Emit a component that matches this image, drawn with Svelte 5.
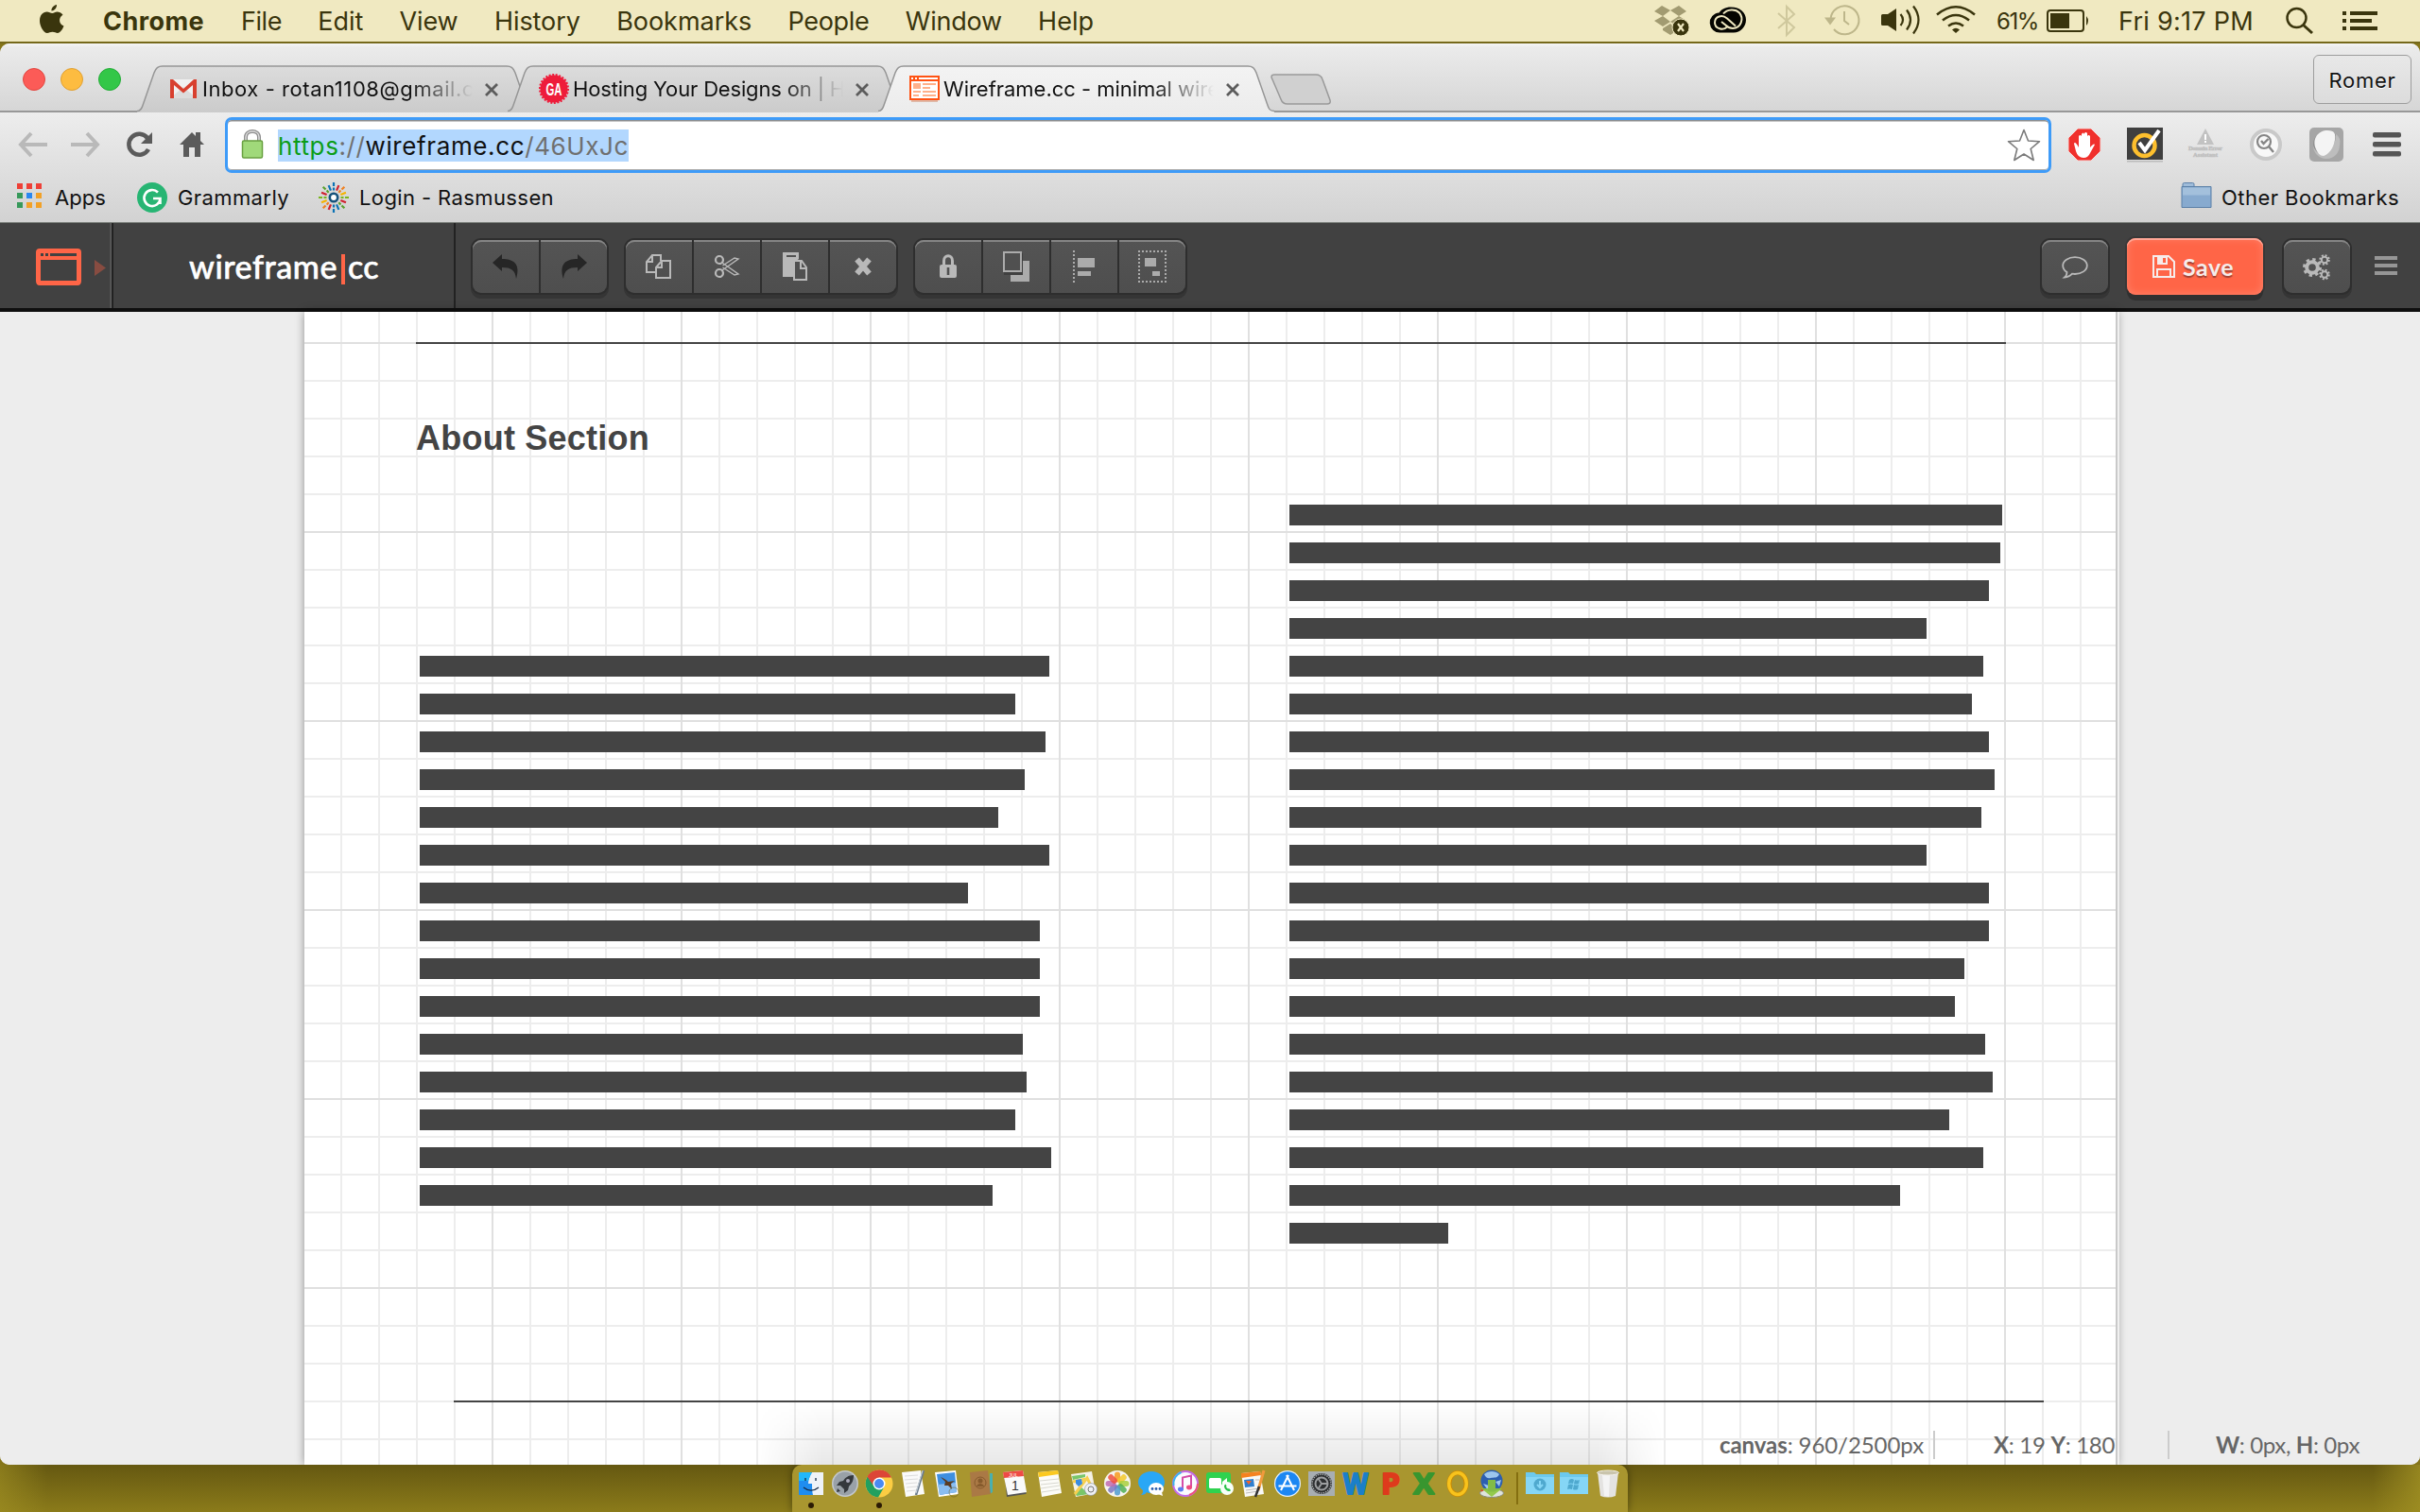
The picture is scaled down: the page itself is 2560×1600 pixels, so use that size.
<script>
  const menus = [
    ['File', 43], ['Edit', 48], ['View', 62], ['History', 91], ['Bookmarks', 143],
    ['People', 86], ['Window', 102], ['Help', 59]
  ];
  const tabs = [
    { icon: 'gmail', title: 'Inbox - rotan1108@gmail.c', width: 288 },
    { icon: 'ga', title: 'Hosting Your Designs on | H', width: 288 },
    { icon: 'wire', title: 'Wireframe.cc - minimal wire', width: 292, active: true }
  ];
  const leftBars = [666, 630, 662, 640, 612, 666, 580, 656, 656, 656, 638, 642, 630, 668, 606];
  const rightBars = [754, 752, 740, 674, 734, 722, 740, 746, 732, 674, 740, 740, 714, 704, 736, 744, 698, 734, 646, 168];
  const dock = ['finder', 'launchpad', 'chrome', 'textedit', 'mail', 'contacts', 'calendar', 'notes', 'maps', 'photos',
    'messages', 'itunes', 'facetime', 'pages', 'appstore', 'settings', 'word', 'powerpoint', 'excel', 'outlook', 'download'];
  const running = ['finder', 'chrome'];
  const petals = ['#f79a1e', '#f4c92c', '#a8cf3d', '#4fae54', '#4f9bd0', '#7a78c4', '#c06bb0', '#ee4f3f'];
  const rays = ['#0b72b5', '#f4b400', '#5aa02c', '#d0202e', '#7ab51d', '#0b72b5', '#f08020', '#d0202e'];

  // Spreads a label's letters so that it takes exactly the given width.
  function fit(node, width) {
    const natural = node.getBoundingClientRect().width;
    node.style.letterSpacing = (width - natural) / node.textContent.length + 'px';
  }
</script>

{#snippet favicon(name)}
  {#if name === 'gmail'}
    <svg width="32" height="32" viewBox="0 0 32 32">
      <path d="M2 6h28v20H2z" fill="#f1f1f1" /><path d="M2 26l14-12 14 12z" fill="#dcdcdc" />
      <path d="M2 26V6h3l11 10L27 6h3v20h-4V12L16 20.500 6 12v14z" fill="#d8402f" />
    </svg>
  {:else if name === 'ga'}
    <svg width="32" height="32" viewBox="0 0 32 32">
      <circle cx="16" cy="16" r="14.500" fill="#ee1c3a" /><circle cx="16" cy="16" r="15" fill="none" stroke="#ee1c3a" stroke-width="2" stroke-dasharray="2 1.600" />
      <text x="16" y="23" text-anchor="middle" class="ga" textLength="17" lengthAdjust="spacingAndGlyphs">GA</text>
    </svg>
  {:else}
    <svg width="32" height="32" viewBox="0 0 32 32">
      <path d="M2 27h28v3H2z" fill="#e0b9a8" /><path d="M0 2h32v26H0z" fill="#ff5314" />
      <path d="M2 8h28v18H2zM2 4h2v2H2zM6 4h2v2H6zM10 4h20v2H10z" fill="#fff" />
      <path d="M4 10h8v6H4zM14 10h14v2H14zM14 14h8v2h-8zM4 18h8v2H4zM14 18h14v2H14zM4 22h6v2H4zM14 22h14v2H14z" fill="#ffb08a" />
    </svg>
  {/if}
{/snippet}

{#snippet dockIcon(name)}
  <svg width="30" height="30" viewBox="0 0 30 30">
    {#if name === 'finder'}
      <path d="M2 3h26v24H2z" fill="#eef2f8" /><path d="M2 3h14c-3 5-4 9-4 12h4c0 5 0 8 1 12H2z" fill="#1f8df0" /><path d="M2 3h14c-2 3-3 6-4 9H2z" fill="#22b8f8" />
      <path d="M9 9v3M20 9v3M7 19c5 4 11 4 16 0" stroke="#182a44" stroke-width="1.300" fill="none" />
    {:else if name === 'launchpad'}
      <circle cx="15" cy="15" r="14" fill="#c3c8cd" /><circle cx="15" cy="15" r="12.500" fill="#99a1a8" />
      <path d="M24 6c-6 0-9 3-11 6l-4 1-3 4 4 0 4 4 0 4 4-3 1-4c3-3 5-6 5-12z" fill="#34383d" /><circle cx="18" cy="12" r="2" fill="#aab" /><path d="M6 24l1-4 3 3z" fill="#34383d" />
    {:else if name === 'chrome'}
      <circle cx="15" cy="15" r="14.500" fill="#fccd43" /><path d="M15 15L2.500 7.800A14.500 14.500 0 0 1 27.500 8H15z" fill="#dc4637" />
      <path d="M2.500 7.800A14.500 14.500 0 0 0 14 29.500L20 19l-5-4z" fill="#22a05f" /><path d="M2.500 7.800A14.500 14.500 0 0 1 28 8.500H15a6.500 6.500 0 0 0-6.200 8.500z" fill="#dc4637" />
      <circle cx="15" cy="15" r="6.500" fill="#fff" /><circle cx="15" cy="15" r="5" fill="#4a8af4" />
    {:else if name === 'textedit'}
      <path d="M3 3l20-2 4 25-20 3z" fill="#fafafa" /><path d="M6 7l14-1M6 11l14-1M7 15l12-1M8 19l11-1M8 23l10-1" stroke="#dcdcdc" /><path d="M26 1l-8 26" stroke="#6c7c8c" stroke-width="2.500" /><path d="M25 1l-7 24" stroke="#cdd6de" />
    {:else if name === 'mail'}
      <path d="M2 3l22-2 3 25-21 3z" fill="#fff" /><path d="M4 5l19-2 2 21-18 3z" fill="#3f8fe0" /><path d="M5 16l19-2 1 10-18 3z" fill="#8abdf0" />
      <path d="M8 8c3 1 6 3 8 5l7-1-4 3 1 6-4-4-4 0 1-4z" fill="#5b3c22" /><circle cx="22" cy="24" r="5" fill="none" stroke="#65591f" opacity=".5" />
    {:else if name === 'contacts'}
      <path d="M24 4l3 0v20l-3 2z" fill="#48b0b0" /><path d="M3 3l19-2 3 25-20 3z" fill="#aa7945" /><circle cx="14" cy="14" r="6" fill="none" stroke="#855a2c" /><circle cx="14" cy="12" r="2.500" fill="#855a2c" /><path d="M10 18c1-4 7-4 8 0z" fill="#855a2c" />
    {:else if name === 'calendar'}
      <path d="M4 8l23 17-1 1-20 3z" fill="#555" /><path d="M2 3l21-2 4 23-20 3z" fill="#fafafa" /><path d="M2 3l21-2 1 6-21 2z" fill="#ee4b45" />
      <text x="13" y="7.500" text-anchor="middle" class="cal-m">JUL</text><text x="15" y="22" text-anchor="middle" class="cal-d">1</text>
    {:else if name === 'notes'}
      <path d="M3 3l21-2 4 24-21 4z" fill="#fcfcf8" /><path d="M3 3l21-2 1 4-21 3z" fill="#fbc920" /><path d="M5 12l20-2M6 16l19-2M6 20l20-3M7 24l19-3" stroke="#d8d8d0" />
    {:else if name === 'maps'}
      <path d="M2 5l22-3 4 23-21 4z" fill="#f5f2e6" /><path d="M3 7l14-2 0 3-13 3zM5 24l8-5 8 7-13 2z" fill="#79c66a" /><path d="M4 13l14-3M6 26L19 9l6 12" stroke="#f7cf4e" stroke-width="3" fill="none" /><path d="M7 11l6-1 1 5-4 3-3-3z" fill="#3b8be0" />
      <circle cx="23" cy="21" r="6.500" fill="#eef0f4" stroke="#8891a0" stroke-width=".6" /><circle cx="23" cy="21" r="3" fill="none" stroke="#777" />
    {:else if name === 'photos'}
      <circle cx="15" cy="15" r="14" fill="#f6f4ef" />
      {#each petals as fill, i}<rect x="12" y="2.500" width="6" height="11" rx="3" {fill} opacity=".85" transform={`rotate(${i * 45} 15 15)`} />{/each}
    {:else if name === 'messages'}
      <path d="M15 2c8 0 14 5 14 11.500S23 25 15 25c-2 0-4 0-5-1-1 2-3 3-6 3 2-2 2-3 2-5-3-2-5-5-5-8.500C1 7 7 2 15 2z" fill="#29a7f5" /><ellipse cx="20" cy="20.500" rx="8" ry="6.500" fill="#fff" /><path d="M26 24l1 4-5-2z" fill="#fff" />
      <circle cx="16" cy="20.500" r="1.400" fill="#2a5fae" /><circle cx="20" cy="20.500" r="1.400" fill="#2a5fae" /><circle cx="24" cy="20.500" r="1.400" fill="#2a5fae" />
    {:else if name === 'itunes'}
      <circle cx="15" cy="15" r="13" fill="#fbfbff" stroke="#c46be8" stroke-width="2" /><path d="M2.500 17a13 13 0 0 1 8-14" stroke="#38b8f0" stroke-width="2" fill="none" /><path d="M19 27a13 13 0 0 0 9-12" stroke="#f0507c" stroke-width="2" fill="none" />
      <path d="M12 21V8.500l9-2V18" stroke="#d64ca8" stroke-width="2" fill="none" /><ellipse cx="10" cy="21" rx="3" ry="2.400" fill="#5c7cf0" /><ellipse cx="19" cy="19" rx="3" ry="2.400" fill="#ee4a80" />
    {:else if name === 'facetime'}
      <rect x="1" y="3" width="26" height="22" rx="3" fill="#2fd24f" /><rect x="4" y="9" width="13" height="11" rx="1.500" fill="#fff" /><path d="M18 13l5-4v11l-5-4z" fill="#fff" /><circle cx="23" cy="20" r="7" fill="#f7fff8" />
      <path d="M20 17c0 4 3 6 6 6l1-1-2-2-1 .500-2-2 .500-1-1-2z" fill="#27c148" />
    {:else if name === 'pages'}
      <path d="M2 4l20-2 4 24-20 3z" fill="#f8f8f6" /><path d="M2 4l20-2 1 4-21 3z" fill="#f58220" /><path d="M5 11l10-1 1 8-10 1z" fill="#2f7fd0" /><path d="M7 12l3 4 3-4z" fill="#f0642c" /><path d="M7 22l14-2M7 25l13-2M17 11l4 0" stroke="#bbb" />
      <path d="M26 1l-6 21" stroke="#f29a3c" stroke-width="3" /><path d="M21 18l-4 11" stroke="#333" stroke-width="2.500" />
    {:else if name === 'appstore'}
      <circle cx="15" cy="15" r="14" fill="#e3f0fc" /><circle cx="15" cy="15" r="12.800" fill="#1c87f2" /><path d="M16 6L8 22M14 6l8 16M5.500 17.500h19" stroke="#fff" stroke-width="2" fill="none" />
    {:else if name === 'settings'}
      <path d="M1 2h28v26H1z" fill="#a8aeb2" /><circle cx="15" cy="15" r="11" fill="#2d2f31" /><circle cx="15" cy="15" r="10" fill="none" stroke="#a5a8aa" stroke-width="1.500" stroke-dasharray="1.500 1" /><circle cx="15" cy="15" r="6.500" fill="none" stroke="#9c9ea0" stroke-width="2" /><path d="M15 15l7 0M15 15l-4-6M15 15l-4 6" stroke="#9c9ea0" stroke-width="1.800" />
    {:else if name === 'word'}
      <text x="15" y="26" text-anchor="middle" class="office" fill="#1b7fc9" stroke="#1b7fc9" textLength="26" lengthAdjust="spacingAndGlyphs">W</text>
    {:else if name === 'powerpoint'}
      <text x="16" y="26" text-anchor="middle" class="office" fill="#de3a1c" stroke="#de3a1c" textLength="20" lengthAdjust="spacingAndGlyphs">P</text>
    {:else if name === 'excel'}
      <text x="15" y="26" text-anchor="middle" class="office" fill="#38962f" stroke="#38962f" textLength="22" lengthAdjust="spacingAndGlyphs">X</text>
    {:else if name === 'outlook'}
      <ellipse cx="15" cy="15" rx="9" ry="11.500" fill="none" stroke="#c98c06" stroke-width="5" /><ellipse cx="15" cy="15" rx="9.300" ry="11.500" fill="none" stroke="#f8c31c" stroke-width="3.400" />
    {:else if name === 'download'}
      <ellipse cx="15" cy="25" rx="12.500" ry="4.500" fill="#dfe3dc" stroke="#8a8d7c" /><path d="M4 23a12 4 0 0 1 7-3" stroke="#d4502c" stroke-width="2" fill="none" /><circle cx="15" cy="12" r="11.500" fill="#2c5fb0" /><path d="M7 5c4-4 12-4 16 0-2 5-6 3-9 4s-5 0-7-4zM6 15l6 2-1 5zM19 13l6-2-2 7z" fill="#9cc6ee" />
      <path d="M11 11h8v9h7l-11 9-11-9h7z" fill="#8cc63c" opacity=".9" />
    {/if}
  </svg>
{/snippet}

<div class="screen">
  <header class="menubar">
    <svg class="apple" width="26" height="32" viewBox="0 0 26 32"><path d="M18 1c.3 3-2.500 6.500-5.500 6.500C12 4.500 15 1.300 18 1zM18.500 8.500c2 0 4.500 1 6 3.300-5 3-4.300 9.700 1 11.700-1.300 3.500-4 7.500-6.500 7.500-2 0-3-1.200-5.500-1.200S10 31 8 31C4 31 0 23.500 0 18c0-6 3.500-9.500 7.500-9.500 2.300 0 4 1.500 5.800 1.500s3-1.500 5.200-1.500z" fill="#3a350d" /></svg>
    <span class="app" use:fit={107}>Chrome</span>
    <nav>{#each menus as [name, width]}<span use:fit={width}>{name}</span>{/each}</nav>
    <div class="extras">
      <svg class="i-dropbox" width="38" height="34" viewBox="0 0 38 34"><path d="M8 1l9 5-8 6-9-5zM26 1l-9 5 9 6 8-5zM0 17l9-5 8 6-8 5zM26 12l8 5-3 2-7 3-7-4zM9 25l8-5 3 3v7l-3 2-8-5z" fill="#a29b71" /><circle cx="28" cy="24" r="9" fill="#3a350d" stroke="#f0e9c1" /><path d="M25 20l6 8M31 20l-6 8" stroke="#f0e9c1" stroke-width="2.200" /></svg>
      <svg class="i-cc" width="38" height="28" viewBox="0 0 38 28"><path d="M11 27.500A10.500 10.500 0 0 1 9.500 6.500C12 3 16 .5 22 .5c10 0 16 6 16 13.500s-6 13.500-13 13.500z" fill="#050500" /><path d="M18 21.500c-4 4-13 2-13-4.500 0-7 8-9 13-4.500l9 8" fill="none" stroke="#f0e9c1" stroke-width="2" /><path d="M14 7.500C18 2.500 27 2 31 6.500c5 6 2 16-7 16.500-3 0-5-1-7-3l-5-4" fill="none" stroke="#f0e9c1" stroke-width="2" /></svg>
      <svg class="i-bt" width="20" height="32" viewBox="0 0 20 32"><path d="M1 8l17 15-8 8V1l8 8L1 24" fill="none" stroke="#cfc89d" stroke-width="2" /></svg>
      <svg class="i-tm" width="38" height="32" viewBox="0 0 38 32"><path d="M6.500 15A15 15 0 1 1 10 26" fill="none" stroke="#bdb68a" stroke-width="2" /><path d="M0 13.500h12l-6 8z" fill="#bdb68a" /><path d="M21 7v10l5 4" fill="none" stroke="#bdb68a" stroke-width="2" /></svg>
      <svg class="i-vol" width="42" height="32" viewBox="0 0 42 32"><path d="M0 10.500q0-1.500 1.500-1.500H7l9-6v24l-9-6H1.500Q0 21 0 19.500z" fill="#3a350d" /><path d="M20.500 9q5 6 0 12M27 4.500q8 10.500 0 21M34 .5q11 14.500 0 29" fill="none" stroke="#3a350d" stroke-width="2.200" /></svg>
      <svg class="i-wifi" width="42" height="30" viewBox="0 0 42 30"><path d="M1 9.500Q21-7 41 9.500M7 15.500q14-11 28 0M13 21.500q8-6 16 0" fill="none" stroke="#3a350d" stroke-width="2.600" /><path d="M21 29l-4-3.500q4-3.500 8 0z" fill="#3a350d" /></svg>
      <span class="pct" use:fit={44}>61%</span>
      <svg class="i-bat" width="46" height="24" viewBox="0 0 46 24"><rect x="1" y="1" width="38" height="22" rx="3" fill="none" stroke="#3a350d" stroke-width="2" /><path d="M4 4h20v16H4zM42 7q4 5 0 10z" fill="#3a350d" /></svg>
      <span class="clock" use:fit={143}>Fri 9:17 PM</span>
      <svg class="i-search" width="30" height="28" viewBox="0 0 30 28"><circle cx="11.500" cy="11" r="10" fill="none" stroke="#3a350d" stroke-width="2.500" /><path d="M18 18l10 9" stroke="#3a350d" stroke-width="3" /></svg>
      <svg class="i-list" width="38" height="20" viewBox="0 0 38 20"><path d="M0 0h4v4H0zM8 0h29v4H8zM0 8h4v4H0zM8 8h23v4H8zM0 16h4v4H0zM8 16h29v4H8z" fill="#3a350d" /></svg>
    </div>
  </header>

  <div class="window">
    <div class="tabstrip">
      <div class="lights"><i class="red"></i><i class="yellow"></i><i class="green"></i></div>
      <div class="tabs">
        {#each tabs as tab}
          <div class="tab" class:active={tab.active}>
            <svg class="shape" width="420" height="50" viewBox="0 0 420 50">
              <defs>
                <linearGradient id="inactive" x2="0" y2="1"><stop stop-color="#dcdcdc" /><stop offset="1" stop-color="#cbcbcb" /></linearGradient>
                <linearGradient id="active" x2="0" y2="1"><stop stop-color="#f3f3f3" /><stop offset="1" stop-color="#ececec" /></linearGradient>
              </defs>
              <path d="M0 48.500c4 0 5-3 6-6L18 8c2-5 4-7 9-7h364c5 0 7 2 9 7l12 34.500c1 3 2 6 7 6v1.500H0z" fill={tab.active ? 'url(#active)' : 'url(#inactive)'} />
              <path d="M0 48.500c4 0 5-3 6-6L18 8c2-5 4-7 9-7h364c5 0 7 2 9 7l12 34.500c1 3 2 6 7 6" fill="none" stroke="#969696" stroke-width="1.500" />
            </svg>
            {@render favicon(tab.icon)}
            <div class="title"><span use:fit={tab.width}>{tab.title}</span></div>
            <svg class="close" width="16" height="16" viewBox="0 0 16 16"><path d="M2 2l12 12M14 2L2 14" stroke="#5c5c5c" stroke-width="2.800" /></svg>
          </div>
        {/each}
      </div>
      <svg class="newtab" width="66" height="34" viewBox="0 0 66 34"><path d="M5 1h44c4 0 6 2 7 5l8 22c1 3-1 4-3 4H19c-4 0-6-2-7-5L3 6C1 3 2 1 5 1z" fill="#d0d0d0" stroke="#999" stroke-width="1.500" /></svg>
      <div class="user"><span use:fit={71}>Romer</span></div>
    </div>

    <div class="navbar">
      <svg class="n-back" width="32" height="28" viewBox="0 0 32 28"><path d="M14 2L3 14l11 12M3 14h28" fill="none" stroke="#b9b9b9" stroke-width="4" /></svg>
      <svg class="n-fwd" width="32" height="28" viewBox="0 0 32 28"><path d="M18 2l11 12-11 12M29 14H1" fill="none" stroke="#b9b9b9" stroke-width="4" /></svg>
      <svg class="n-reload" width="28" height="28" viewBox="0 0 28 28"><path d="M23 7a11 11 0 1 0 1 12" fill="none" stroke="#5b5b5b" stroke-width="4.500" /><path d="M28 1v12H16z" fill="#5b5b5b" /></svg>
      <svg class="n-home" width="26" height="28" viewBox="0 0 26 28"><path d="M13 1l4 4V1h5v9l4 4h-4v13h-6V17h-6v10H4V14H0z" fill="#5b5b5b" /></svg>
      <div class="omnibox">
        <svg class="lock" width="24" height="32" viewBox="0 0 24 32"><path d="M5 14V8c0-8 14-8 14 0v6" fill="none" stroke="#8f8f8f" stroke-width="4" /><path d="M5 14V8c0-8 14-8 14 0v6" fill="none" stroke="#ddd" stroke-width="1.500" /><rect x="1.500" y="12" width="21" height="18" rx="1.500" fill="#a0d97a" stroke="#68a040" stroke-width="1.500" /></svg>
        <span class="url" use:fit={371}><b>https</b>://<em>wireframe.cc</em>/46UxJc</span>
        <svg class="star" width="36" height="35" viewBox="0 0 36 35"><path d="M18 1.500l4.500 11.500 12 .7-9.300 7.800 3 12L18 27l-10.200 6.500 3-12-9.300-7.800 12-.7z" fill="#fff" stroke="#7a7a7a" stroke-width="1.600" stroke-linejoin="round" /></svg>
      </div>
      <svg class="n-hand" width="36" height="36" viewBox="0 0 36 36"><path d="M11 1h14l10 10v14L25 35H11L1 25V11z" fill="#f0302c" stroke="#f6d6d4" /><path d="M12 21V9q1.500-2 3 0V7q1.500-3 3 0v-1q1.500-2 3 0v3q1.500-2 3 0v12q4-5 5-3l-5 9q-2 5-7 5-6 0-8-7l-2-8q1-3 5 4z" fill="#fff" /></svg>
      <svg class="n-norton" width="38" height="38" viewBox="0 0 38 38"><path d="M0 1h38v34H0z" fill="#3f3f3f" /><path d="M0 36h38v1.500H0z" fill="#bbb" /><circle cx="18.500" cy="20" r="11" fill="none" stroke="#fdbf2d" stroke-width="4.500" /><path d="M13 17l6 8L34 4" fill="none" stroke="#fff" stroke-width="4" /></svg>
      <svg class="n-domain" width="38" height="32" viewBox="0 0 38 32"><path d="M19 1l9 17H10z" fill="#c2c2c2" /><path d="M19 7v6M19 14v2" stroke="#fff" stroke-width="2" /><text x="19" y="24" text-anchor="middle" class="tiny" textLength="36">Domain Error</text><text x="19" y="30.500" text-anchor="middle" class="tiny" textLength="26">Assistant</text></svg>
      <svg class="n-zoom" width="36" height="36" viewBox="0 0 36 36"><circle cx="18" cy="18" r="15" fill="#f8f8f8" stroke="#c9c9c9" stroke-width="4" /><circle cx="16" cy="15" r="7" fill="none" stroke="#858585" stroke-width="2.200" /><path d="M13 14l2.500 3 5-5M21 20l5 6" fill="none" stroke="#858585" stroke-width="2.400" /></svg>
      <svg class="n-leaf" width="38" height="38" viewBox="0 0 38 38"><rect x="1" y="1" width="36" height="36" rx="5" fill="#a6a6a6" /><circle cx="19" cy="19" r="14" fill="#8f8f8f" /><path d="M5 20a14 14 0 0 0 28 0q2-8-4-12 0 16-15 22-7-3-9-10z" fill="#bdbdbd" /><path d="M8 24C3 12 11 4 20 4c8 0 9 4 8 10-1 8-7 16-12 17-4 0-6-3-8-7z" fill="#f4f4f4" /></svg>
      <svg class="n-menu" width="30" height="28" viewBox="0 0 30 28"><rect y="1" width="30" height="5.500" rx="2" fill="#555" /><rect y="11" width="30" height="5.500" rx="2" fill="#555" /><rect y="21" width="30" height="5.500" rx="2" fill="#555" /></svg>
    </div>

    <div class="bookmarks">
      <svg class="b-apps" width="26" height="27" viewBox="0 0 26 27"><path d="M0 0h6v6H0zM10 0h6v6h-6zM20 0h6v6h-6z" fill="#ee4037" /><path d="M0 10h6v6H0zM0 20h6v6H0z" fill="#37995a" /><path d="M10 10h6v6h-6z" fill="#2a87f0" /><path d="M20 10h6v6h-6zM10 20h6v6h-6zM20 20h6v6h-6z" fill="#f2a127" /></svg>
      <span use:fit={54}>Apps</span>
      <svg class="b-gram" width="32" height="32" viewBox="0 0 32 32"><circle cx="16" cy="16" r="16" fill="#27b573" /><path d="M22 10.500a8.500 8.500 0 1 0 2.500 6.500H17M24.500 17v6" fill="none" stroke="#fff" stroke-width="2.600" /></svg>
      <span use:fit={118}>Grammarly</span>
      <svg class="b-ras" width="32" height="32" viewBox="0 0 32 32">
        <circle cx="16" cy="16" r="4.200" fill="#fff" stroke="#15527c" stroke-width="2.600" />
        {#each Array(16) as _, i}<path d={i % 2 ? 'M16 2v6' : 'M16 0v4M16 5.500v3'} stroke={rays[(i * 3) % 8]} stroke-width="2.200" transform={`rotate(${i * 22.5} 16 16)`} />{/each}
      </svg>
      <span use:fit={206}>Login - Rasmussen</span>
      <svg class="b-folder" width="34" height="28" viewBox="0 0 34 28"><path d="M2 5V2q0-1.500 1.500-1.500h9Q14 .5 14 2v3" fill="#9fbcd9" stroke="#5d82aa" /><path d="M1 4.500h31v22H1z" fill="#87aacf" stroke="#5a80a8" /><path d="M2 5.500h29v8H2z" fill="#a3c0dc" /></svg>
      <span use:fit={188}>Other Bookmarks</span>
    </div>

    <div class="toolbar">
      <div class="home">
        <svg width="48" height="40" viewBox="0 0 48 40"><path fill-rule="evenodd" d="M4 0h40q4 0 4 4v30q0 5-4 5H4q-4 0-4-5V4q0-4 4-4zM5 12v22h38V12zM15 5v3h28V5zM5 5v3h3V5zM10 5v3h3V5z" fill="#ff6547" /></svg>
        <svg class="tri" width="12" height="17" viewBox="0 0 12 17"><path d="M0 0l12 8.500L0 17z" fill="#884c41" /></svg>
      </div>
      <div class="logo"><span use:fit={157}>wireframe</span><i></i><span use:fit={33}>cc</span></div>
      <div class="group g1">
        <button aria-label="Undo"><svg width="28" height="28" viewBox="0 0 28 28"><path d="M0 10l10-9v5c12 0 20 5 15 21-1-9-5-12-15-12v4z" fill="#262626" /></svg></button>
        <button aria-label="Redo"><svg width="28" height="28" viewBox="0 0 28 28"><path d="M28 10l-10-9v5C6 6-2 11 3 27c1-9 5-12 15-12v4z" fill="#262626" /></svg></button>
      </div>
      <div class="group g2">
        <button aria-label="Copy"><svg width="28" height="28" viewBox="0 0 28 28"><path d="M10 20H1V9l6-7h9v6M7 2v7H1M11 15l6-7h9v18H11zM17 8v7h-6" fill="none" stroke="#b9b9b9" stroke-width="2" /></svg></button>
        <button aria-label="Cut"><svg width="28" height="26" viewBox="0 0 28 26"><circle cx="6" cy="6" r="4" fill="none" stroke="#b9b9b9" stroke-width="2.200" /><circle cx="6" cy="20" r="4" fill="none" stroke="#b9b9b9" stroke-width="2.200" /><path d="M9 9l17 12-4 1L9.500 14M9 17L26 5l-4-1L9.500 12" fill="none" stroke="#b9b9b9" stroke-width="1.400" /></svg></button>
        <button aria-label="Paste"><svg width="28" height="30" viewBox="0 0 28 30"><path fill-rule="evenodd" d="M1 0h17v7l-6 5v14H1zM5 3v2h10V3z" fill="#b9b9b9" /><path d="M13 29V9h8l5 7v13zM20 10v7h6" fill="#505050" stroke="#b9b9b9" stroke-width="2" /></svg></button>
        <button aria-label="Delete"><svg width="20" height="22" viewBox="0 0 20 22"><path d="M3.500 3.500l13 15M16.500 3.500l-13 15" stroke="#b9b9b9" stroke-width="6" /></svg></button>
      </div>
      <div class="group g3">
        <button aria-label="Lock"><svg width="18" height="26" viewBox="0 0 18 26"><path d="M4.500 12V7c0-7 9-7 9 0v5" fill="none" stroke="#b9b9b9" stroke-width="3" /><rect y="11" width="18" height="14" rx="2" fill="#b9b9b9" /><path d="M9 14v8" stroke="#505050" stroke-width="2.600" /></svg></button>
        <button aria-label="Arrange"><svg width="30" height="32" viewBox="0 0 30 32"><path d="M9 10h20v22H9z" fill="#ababab" /><path d="M2 2h20v23H2z" fill="#404040" /><path d="M2 1h18v20H2z" fill="#505050" stroke="#ababab" stroke-width="2" /></svg></button>
        <button aria-label="Align"><svg width="24" height="34" viewBox="0 0 24 34"><path d="M1 0v34" stroke="#ababab" stroke-width="2" stroke-dasharray="2 2" /><path d="M5 8h18v10H5zM5 22h14v5H5z" fill="#ababab" /></svg></button>
        <button aria-label="Select all"><svg width="30" height="34" viewBox="0 0 30 34"><path d="M1 0v34M29 0v34M4 1h22M4 33h22" stroke="#ababab" stroke-width="2" stroke-dasharray="2 2" /><path d="M7 8h12v9H7zM15 22h8v5h-8z" fill="#ababab" /></svg></button>
      </div>
      <div class="group g4"><button aria-label="Comments"><svg width="28" height="24" viewBox="0 0 28 24"><path d="M14 1.200c7 0 12.800 3.800 12.800 8.800S21 19 14 19l-3-.3C9 21 6 22.500 3 22.500c2-1.500 2.500-3 2.500-5.500C3 15.500 1.200 13 1.200 10c0-5 5.800-8.800 12.800-8.800z" fill="none" stroke="#b9b9b9" stroke-width="1.800" /></svg></button></div>
      <button class="save">
        <svg width="24" height="24" viewBox="0 0 24 24"><path d="M1 1h16l6 6v16H1z" fill="none" stroke="#f6eceb" stroke-width="2" /><path fill-rule="evenodd" d="M5 1h11v9H5zM11 3v5h3V3z" fill="#f6eceb" /><path d="M5 23v-8h14v8" fill="none" stroke="#f6eceb" stroke-width="2" /></svg>
        <span use:fit={54}>Save</span>
      </button>
      <div class="group g5"><button aria-label="Settings"><svg width="30" height="28" viewBox="0 0 30 28"><circle cx="10" cy="14" r="5.800" fill="none" stroke="#b9b9b9" stroke-width="4" /><circle cx="10" cy="14" r="8.500" fill="none" stroke="#b9b9b9" stroke-width="3" stroke-dasharray="3.300 3.370" /><circle cx="23" cy="6" r="3.200" fill="none" stroke="#b9b9b9" stroke-width="2" /><circle cx="23" cy="6" r="4.800" fill="none" stroke="#b9b9b9" stroke-width="2" stroke-dasharray="2 1.770" /><circle cx="23" cy="21.500" r="3.200" fill="none" stroke="#b9b9b9" stroke-width="2" /><circle cx="23" cy="21.500" r="4.800" fill="none" stroke="#b9b9b9" stroke-width="2" stroke-dasharray="2 1.770" /></svg></button></div>
      <svg class="burger" width="24" height="20" viewBox="0 0 24 20"><path d="M0 0h24v4H0zM0 8h24v4H0zM0 16h24v4H0z" fill="#969696" /></svg>
    </div>

    <main>
      <div class="page">
        <hr class="top" />
        <h1><span use:fit={247}>About Section</span></h1>
        <div class="columns">
          <div class="bars left">{#each leftBars as w}<i style:width="{w}px"></i>{/each}</div>
          <div class="bars right">{#each rightBars as w}<i style:width="{w}px"></i>{/each}</div>
        </div>
        <hr class="bottom" />
      </div>
      <div class="status">
        <div class="s1"><span use:fit={216}><b>canvas</b>: 960/2500px</span></div>
        <div class="s2"><span use:fit={128}><b>X</b>: 19 <b>Y</b>: 180</span></div>
        <div class="s3"><span use:fit={152}><b>W</b>: 0px, <b>H</b>: 0px</span></div>
      </div>
      <div class="dockshade"></div>
    </main>
  </div>

  <footer>
    <div class="dock">
      {#each dock as name}
        <div class="cell">{@render dockIcon(name)}{#if running.includes(name)}<i></i>{/if}</div>
      {/each}
      <div class="sep"></div>
      <div class="cell"><svg width="30" height="30" viewBox="0 0 30 30"><path d="M0 3h9l2 2h19v21H0z" fill="#6cc9ee" /><path d="M0 8h30v18H0z" fill="#85d6f6" /><circle cx="15" cy="16" r="6.500" fill="#4fa9cf" /><path d="M15 12v6M12 16l3 3 3-3" stroke="#85d6f6" stroke-width="2" fill="none" /></svg></div>
      <div class="cell"><svg width="30" height="30" viewBox="0 0 30 30"><path d="M0 3h9l2 2h19v21H0z" fill="#6cc9ee" /><path d="M0 8h30v18H0z" fill="#85d6f6" /><path d="M10 11q3-2 5 0l-1 4q-2-1-5 0zM16 11q3 1 5 0l-1 4q-3 1-5 0zM9 16q3-1 5 0l-1 5q-3-1-5 0zM15 16q3 1 5 0l-1 5q-3 1-5 0z" fill="#4fa9cf" /></svg></div>
      <div class="cell"><svg width="30" height="30" viewBox="0 0 30 30"><path d="M4 3l3 25q8 3 16 0l3-25z" fill="#e4e3e1" /><path d="M9 6l2 22 5 1 1-23z" fill="#f4f4f4" /><ellipse cx="15" cy="3.500" rx="11.500" ry="2.500" fill="#c9c4ac" stroke="#f3f1ea" /></svg></div>
    </div>
  </footer>
</div>

<style>
  :global(body) { margin: 0; background: #85751a; }
  * { box-sizing: border-box; }
  svg { display: block; flex: none; overflow: visible; }
  span { white-space: pre; }
  .screen { width: 2560px; height: 1600px; overflow: hidden; display: flex; flex-direction: column; font-family: Inter, sans-serif; background: #85751a; }

  .menubar { height: 46px; flex: none; background: #f0e9c1; border-bottom: 2px solid #75681a; display: flex; align-items: center; padding-left: 42px; font-size: 27px; color: #3a350d; }
  .apple { margin: -4px 41px 0 0; }
  .app { font-weight: 700; margin-right: 39px; }
  nav { display: flex; gap: 38.300px; }
  .extras { margin-left: auto; display: flex; align-items: center; padding-right: 44px; }
  .i-dropbox { margin: 0 21px 0 0; }
  .i-cc { margin: -3px 33px 0 0; }
  .i-bt { margin-right: 30px; }
  .i-tm { margin: -2px 22px 0 0; }
  .i-vol { margin-right: 16px; }
  .i-wifi { margin: -2px 22px 0 0; }
  .pct { font-size: 24px; margin-right: 9px; }
  .i-bat { margin-right: 30px; }
  .clock { margin-right: 34px; }
  .i-search { margin-right: 30px; }

  .window { height: 1504px; flex: none; display: flex; flex-direction: column; border-radius: 10px; overflow: hidden; background: #eee; }
  .tabstrip { height: 73px; flex: none; display: flex; align-items: flex-end; background: linear-gradient(#f6f6f6, #ebebeb 4px, #d6d6d6); border-bottom: 2px solid #989898; padding: 0 9px 0 24px; }
  .lights { display: flex; gap: 16px; margin-bottom: 21px; width: 121px; }
  .lights i { width: 24px; height: 24px; border-radius: 50%; border: 1px solid #e2463f; background: #fc5b57; }
  .lights .yellow { background: #fdbc40; border-color: #e0a032; }
  .lights .green { background: #33c748; border-color: #22ac36; }
  .tabs { display: flex; margin-bottom: -2px; }
  .tab { position: relative; width: 420px; height: 50px; margin-right: -28px; display: flex; align-items: center; padding: 0 0 0 33px; }
  .tab.active { z-index: 1; }
  .tab > :global(*) { position: relative; }
  .tab .shape { position: absolute; inset: 0; }
  .title { width: 289px; margin-left: 4px; overflow: hidden; font-size: 22px; color: #111; mask-image: linear-gradient(90deg, #000 76%, transparent 99%); }
  .close { margin: 1px 0 0 9px; }
  .newtab { margin: 0 auto 5px 22px; }
  .user { width: 104px; height: 52px; border: 1.500px solid #9d9d9d; border-radius: 6px; margin-bottom: 7px; padding-top: 2px; background: linear-gradient(#e8e8e8, #dcdcdc); display: flex; align-items: center; justify-content: center; font-size: 22px; color: #111; text-shadow: 0 1px #fff; }

  .navbar { height: 65px; flex: none; display: flex; align-items: center; padding: 3px 0 0 19px; background: linear-gradient(#ededed, #dedede); }
  .n-fwd { margin-left: 23px; }
  .n-reload { margin-left: 27px; }
  .n-home { margin-left: 29px; }
  .omnibox { width: 1932px; height: 59px; margin: 0 17px 0 22px; border: 3px solid #3e9bf8; border-radius: 7px; background: #fff; box-shadow: inset 0 1.500px #8e8e8e, inset 0 -1px #aaa; display: flex; align-items: center; padding-left: 14px; }
  .url { margin: 1px 0 0 15px; background: #b2d7fe; font-size: 26px; line-height: 33px; padding-top: 1px; color: #6f6f6f; }
  .url b { font-weight: 400; color: #0c9d17; }
  .url em { font-style: normal; color: #111; }
  .star { margin: 0 8px 0 auto; }
  .n-norton { margin-left: 27px; }
  .n-domain { margin: -4px 0 0 26px; }
  .n-zoom { margin-left: 27px; }
  .n-leaf { margin-left: 27px; }
  .n-menu { margin-left: 30px; }
  .tiny { font: 700 6.500px "Liberation Serif", serif; fill: #b5b5b5; stroke: #c2c2c2; stroke-width: .5; }
  .ga { font: 700 19px "Liberation Sans", sans-serif; fill: #fff; }

  .bookmarks { height: 52px; flex: none; display: flex; align-items: center; padding: 0 22px 2px 18px; background: linear-gradient(#dedede, #d2d2d2); border-bottom: 1px solid #7a7e7a; font-size: 22px; color: #111; }
  .b-apps { margin: -2px 14px 0 0; }
  .b-gram { margin: 0 11px 0 33px; }
  .b-ras { margin: 0 11px 0 31px; }
  .b-folder { margin: -3px 9px 0 auto; }

  .toolbar { height: 94px; flex: none; background: #414141; border-bottom: 4px solid #0f0f0f; display: flex; align-items: center; }
  .home { width: 120px; align-self: stretch; border-right: 2px solid #222; box-shadow: inset -1.500px 0 #5e5e5e; display: flex; align-items: center; padding: 4px 0 0 38px; }
  .tri { margin-left: 14px; }
  .logo { width: 362px; align-self: stretch; border-right: 2px solid #222; display: flex; align-items: center; padding: 1px 0 0 80px; font: 500 34px/40px Lato, sans-serif; color: #fff; -webkit-text-stroke: .6px #fff; }
  .logo i { width: 4px; height: 32px; margin: 6px 3px 0 4px; background: #ff6547; }
  .logo span { flex: none; }
  .group { display: flex; height: 60px; margin-top: 1px; border: 2px solid #2e2e2e; border-radius: 11px; background: #2e2e2e; gap: 2px; box-shadow: 0 4px #353535; }
  .group button { width: 70px; height: 56px; border: 0; padding: 0; background: linear-gradient(#545454, #4e4e4e); box-shadow: inset 0 2px #858585; display: flex; align-items: center; justify-content: center; }
  .group button:first-child { border-radius: 9px 0 0 9px; }
  .group button:last-child { border-radius: 0 9px 9px 0; }
  .group button:only-child { border-radius: 9px; }
  .g1 { margin-left: 16px; }
  .g2, .g3 { margin-left: 16px; }
  .g4 { margin-left: auto; }
  .g4 button, .g5 button { padding-top: 2px; }
  .save { width: 144px; height: 60px; margin: 2px 20px 0 18px; border: 0; border-radius: 9px; background: #ff6547; box-shadow: inset 0 2px #ffa696, inset 0 0 8px #ff8870, 0 6px #303030, 0 0 0 2px #383838; display: flex; align-items: center; padding: 0 0 1px 27px; gap: 8px; font: 700 25px Lato, sans-serif; color: #f6eceb; text-shadow: 0 2px 1px #a34335; }
  .burger { margin: 0 24px 0 24px; }

  main { position: relative; flex: 1; background: #ededed; }
  .page { width: 1918px; height: 1220px; margin-left: 322px; padding-top: 32px; border-right: 2px solid #c9c9c9; box-shadow: 2px 0 #f0f0f0, 0 0 9px rgba(0, 0, 0, .4);
    background:
      linear-gradient(90deg, #e0e0e0 2px, transparent 2px) 198px 32px / 200px 200px,
      linear-gradient(#e0e0e0 2px, transparent 2px) 198px 32px / 200px 200px,
      linear-gradient(90deg, #ededed 2px, transparent 2px) 38px 32px / 40px 40px,
      linear-gradient(#ededed 2px, transparent 2px) 38px 32px / 40px 40px, #fff; }
  hr { width: 1682px; height: 2px; margin: 0 0 0 118px; border: 0; background: #444; }
  h1 { margin: 80px 0 0 118px; font: 700 36px/40px "Liberation Sans", sans-serif; color: #444; height: 40px; }
  .columns { display: flex; margin: 50px 0 0 122px; height: 948px; }
  .bars { display: flex; flex-direction: column; gap: 18px; }
  .bars i { display: block; height: 22px; background: #444; }
  .left { width: 920px; padding-top: 160px; }
  hr.bottom { margin-left: 158px; }
  .status { position: absolute; right: 0; bottom: 6px; display: flex; height: 30px; align-items: center; font: 24px/30px Lato, sans-serif; color: #666; }
  .status b { font-weight: 700; }
  .s1 { width: 226px; }
  .s2 { width: 250px; border-left: 2px solid #ccc; border-right: 2px solid #ccc; padding-left: 62px; }
  .s3 { width: 265px; padding-left: 49px; }
  .dockshade { position: absolute; left: 800px; right: 800px; bottom: 0; height: 66px; background: linear-gradient(transparent, rgba(0, 0, 0, .09)); mask-image: linear-gradient(90deg, transparent, #000 70px, #000 890px, transparent); }

  footer { flex: 1; display: flex; justify-content: center; background: linear-gradient(90deg, #a0902399, transparent 50px, transparent 2510px, #a09023cc), linear-gradient(#655811, #8b7b1a); }
  .dock { width: 884px; height: 50px; padding-left: 2px; border-radius: 10px 10px 0 0; background: #a9962f; box-shadow: 0 0 8px rgba(0, 0, 0, .4); display: flex; }
  .cell { width: 36px; flex: none; display: flex; flex-direction: column; align-items: center; padding-top: 5px; gap: 5px; }
  .cell i { width: 6px; height: 6px; border-radius: 50%; background: #2b1a04; }
  .sep { width: 2px; height: 34px; margin: 8px 5px 0 8px; background: #846f10; }
  .cal-m { font: 5.500px "Liberation Sans", sans-serif; fill: #fff; }
  .cal-d { font: 14px "Liberation Sans", sans-serif; fill: #333; }
  .office { font: 700 30px "Open Sans", sans-serif; stroke-width: 2; stroke-linejoin: round; }
</style>
